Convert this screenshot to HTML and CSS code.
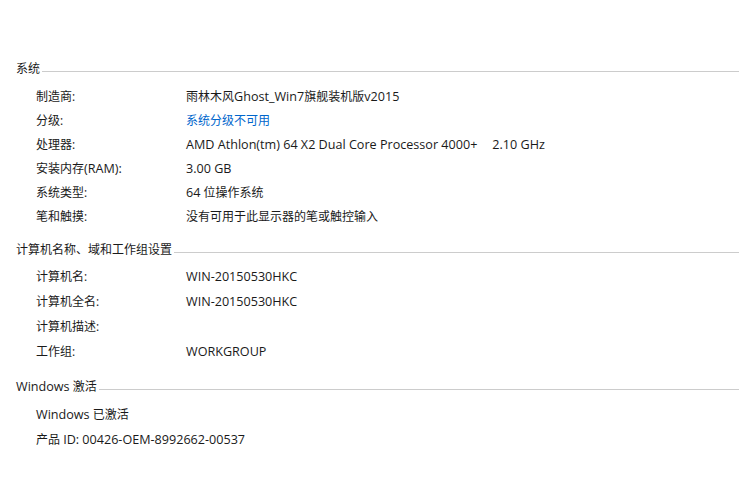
FILE: index.html
```html
<!DOCTYPE html>
<html lang="zh-CN">
<head>
<meta charset="utf-8">
<title>系统</title>
<link rel="stylesheet" href="styles.css">
</head>
<body>
<div class="page">
  <section class="group g1">
    <div class="heading"><span class="title">系统</span><span class="rule"></span></div>
    <div class="rows">
      <div class="row"><span class="label">制造商:</span><span class="value">雨林木风<span class="en">Ghost_Win7</span>旗舰装机版<span class="en">v2015</span></span></div>
      <div class="row"><span class="label">分级:</span><span class="value link">系统分级不可用</span></div>
      <div class="row"><span class="label">处理器:</span><span class="value"><span class="en">AMD Athlon(tm) 64 X2 Dual Core Processor 4000+</span><span class="en speed">2.10 GHz</span></span></div>
      <div class="row"><span class="label">安装内存<span class="en">(RAM):</span></span><span class="value"><span class="en">3.00 GB</span></span></div>
      <div class="row"><span class="label">系统类型:</span><span class="value"><span class="en">64</span> 位操作系统</span></div>
      <div class="row"><span class="label">笔和触摸:</span><span class="value">没有可用于此显示器的笔或触控输入</span></div>
    </div>
  </section>
  <section class="group g2">
    <div class="heading"><span class="title">计算机名称、域和工作组设置</span><span class="rule"></span></div>
    <div class="rows">
      <div class="row"><span class="label">计算机名:</span><span class="value"><span class="en">WIN-20150530HKC</span></span></div>
      <div class="row"><span class="label">计算机全名:</span><span class="value"><span class="en">WIN-20150530HKC</span></span></div>
      <div class="row"><span class="label">计算机描述:</span><span class="value"></span></div>
      <div class="row"><span class="label">工作组:</span><span class="value"><span class="en">WORKGROUP</span></span></div>
    </div>
  </section>
  <section class="group g3">
    <div class="heading"><span class="title"><span class="en">Windows</span> 激活</span><span class="rule"></span></div>
    <div class="rows single">
      <div class="row"><span class="label"><span class="en">Windows</span> 已激活</span></div>
      <div class="row"><span class="label">产品 <span class="en">ID: 00426-OEM-8992662-00537</span></span></div>
    </div>
  </section>
</div>
</body>
</html>
```
FILE: styles.css
```css
html, body {
  margin: 0;
  padding: 0;
  background: #ffffff;
}
body {
  font-family: "Open Sans", "Noto Sans CJK SC", sans-serif;
  font-size: 12px;
  color: #1a1a1a;
}
.en {
  font-size: 12.6px;
}
.speed {
  margin-left: 15px;
}
.page {
  padding-top: 61px;
  padding-left: 16px;
}
.heading {
  display: flex;
  align-items: center;
  height: 16px;
  line-height: 16px;
}
.title {
  white-space: nowrap;
}
.rule {
  flex: 1;
  height: 1px;
  background: #cccccc;
  margin-left: 2px;
  margin-top: 4px;
}
.rows {
  padding-left: 20px;
}
.row {
  display: grid;
  grid-template-columns: 150px 1fr;
  height: 24px;
  line-height: 24px;
  white-space: nowrap;
}
.single .row {
  display: block;
}
.link {
  color: #0066cc;
}
.g1 .rows { margin-top: 8px; }
.g2 { margin-top: 13px; }
.g2 .rows { margin-top: 6px; }
.g2 .row { height: 25px; line-height: 25px; }
.g3 { margin-top: 15px; }
.g3 .rows { margin-top: 8px; }
.g3 .row { height: 24.5px; line-height: 24.5px; }
```
